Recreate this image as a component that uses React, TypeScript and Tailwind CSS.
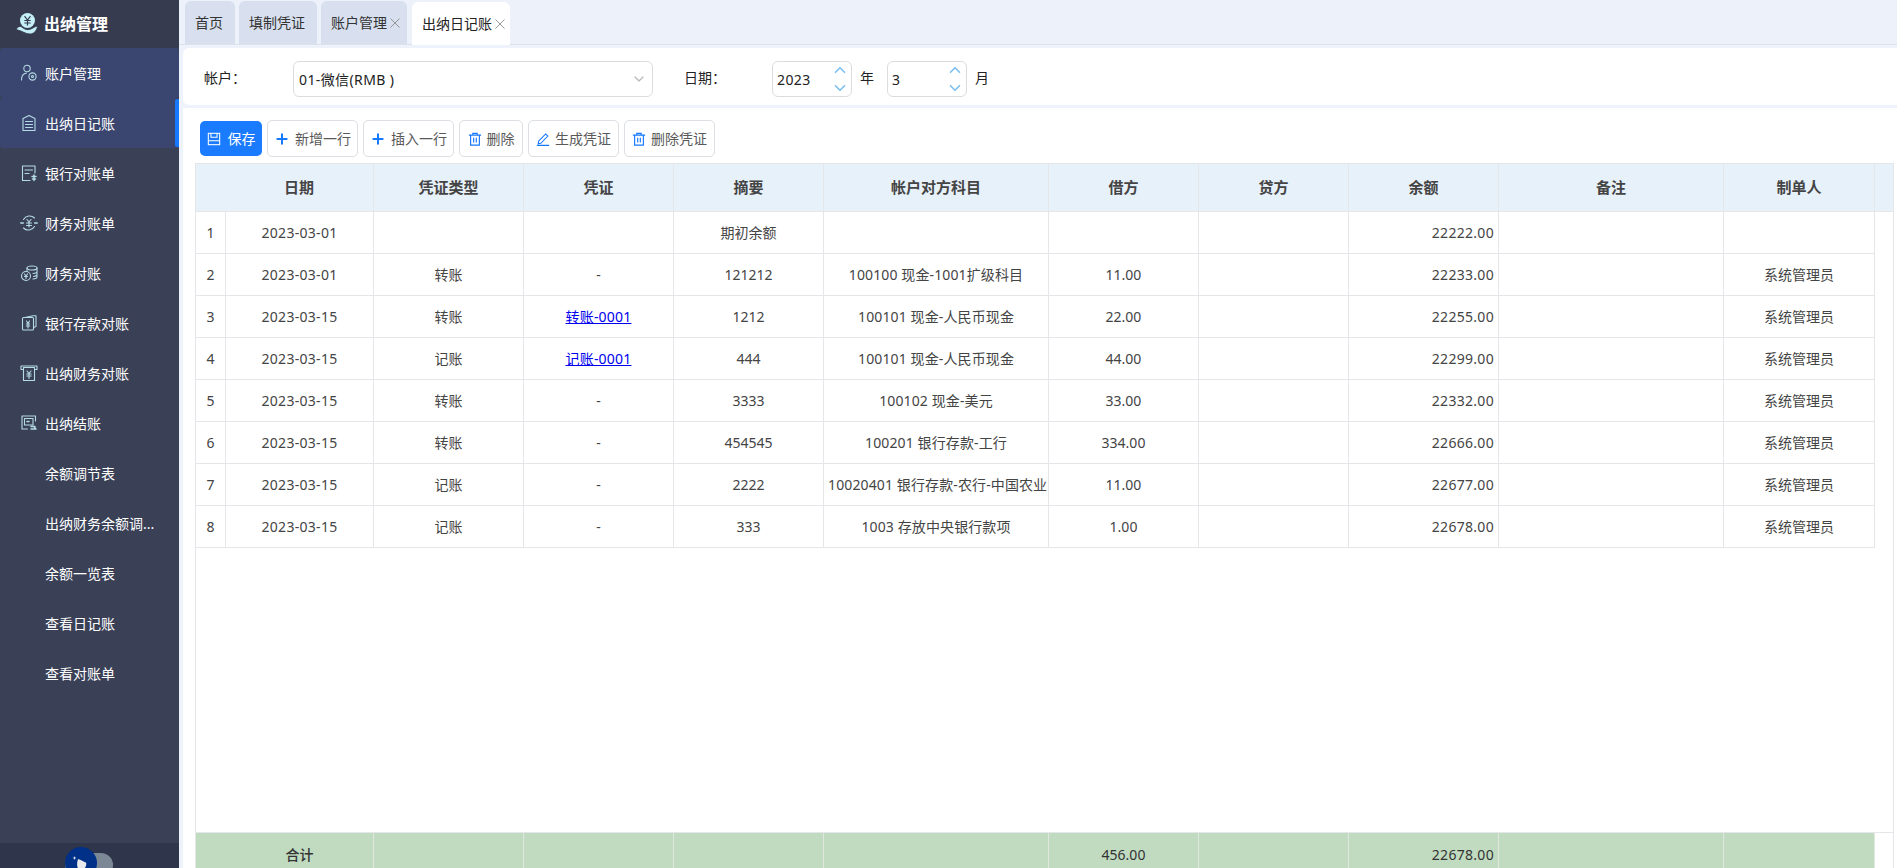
import { ChevronDown, ChevronUp, Plus } from "lucide-react";
import type { ReactNode } from "react";

const font = "font-['Noto_Sans','Noto_Sans_CJK_SC',sans-serif]";

const Ic = ({ children }: { children: ReactNode }) => (
  <svg
    viewBox="0 0 18 18"
    className="w-[18px] h-[18px] shrink-0"
    fill="none"
    stroke="#b5dbe4"
    strokeWidth="1.1"
    strokeLinecap="round"
    strokeLinejoin="round"
  >
    {children}
  </svg>
);

const menu: { name: string; icon?: ReactNode; hi?: boolean; active?: boolean }[] = [
  {
    name: "账户管理",
    hi: true,
    icon: (
      <Ic>
        <circle cx="7" cy="4.5" r="3.2" />
        <path d="M1.5 16c0-4 1.5-6.5 5-7" />
        <circle cx="12.5" cy="12.5" r="3.6" />
        <circle cx="12.5" cy="12.5" r="1" />
      </Ic>
    ),
  },
  {
    name: "出纳日记账",
    hi: true,
    active: true,
    icon: (
      <Ic>
        <path d="M3 4.5 9 1.5l6 3V16.5H3z" />
        <path d="M5.5 7.5h7M5.5 10.5h7M5.5 13.5h7" />
      </Ic>
    ),
  },
  {
    name: "银行对账单",
    icon: (
      <Ic>
        <path d="M15 9V2H2.5v14.5H10" />
        <path d="M5 6h7.5M5 9.5h4" />
        <path d="M12 12.5h4M14 11v5.5M12.5 15h3" strokeWidth="1.5" />
      </Ic>
    ),
  },
  {
    name: "财务对账单",
    icon: (
      <Ic>
        <path d="M3.5 5.5a7 7 0 0 1 11-1.5M14.5 12.5a7 7 0 0 1-11 1.5" />
        <path d="M.8 9h2.5M14.7 9h2.5" strokeWidth="1.5" />
        <path d="M7 5.5 9 8l2-2.500M6.500 9h5M6.500 11.500h5M9 8v5" />
      </Ic>
    ),
  },
  {
    name: "财务对账",
    icon: (
      <Ic>
        <ellipse cx="12" cy="4" rx="5" ry="2" />
        <path d="M7 4v3M17 4v9c0 1-1.500 1.800-4 2M17 7.500c0 1-1.500 1.800-4 2M17 10.500c0 1-1.500 1.700-3.500 2" />
        <circle cx="6" cy="12" r="4.500" />
        <path d="M4.500 10 6 12l1.500-2M4.500 12.500h3M6 12v2.500" />
      </Ic>
    ),
  },
  {
    name: "银行存款对账",
    icon: (
      <Ic>
        <path d="M5 3.500 13 1.800h3V12.500l-2.500 1" />
        <rect x="2.500" y="3.500" width="11" height="12.500" rx="1" />
        <path d="M6.500 7 8 9.500 9.500 7M6.300 10h3.400M6.300 12h3.400M8 9.500V14" />
      </Ic>
    ),
  },
  {
    name: "出纳财务对账",
    icon: (
      <Ic>
        <path d="M1 2h16v3.500H14.500M1 2v3.500h2.500" />
        <path d="M3.500 3.500h11V16.500h-11z" />
        <path d="M7 7l2 2.500L11 7M6.800 10h4.400M6.800 12h4.400M9 9.500V14.500" />
      </Ic>
    ),
  },
  {
    name: "出纳结账",
    icon: (
      <Ic>
        <path d="M15.500 7V2H2v13h5.500" />
        <path d="M4.500 4.500h8.500V11H4.500z" />
        <path d="M7 7.500h2M11 15h5M16 15l-1.500-1.500M11 12.500h4" strokeWidth="1.500" />
      </Ic>
    ),
  },
  { name: "余额调节表" },
  { name: "出纳财务余额调..." },
  { name: "余额一览表" },
  { name: "查看日记账" },
  { name: "查看对账单" },
];

const Sidebar = () => (
  <aside className="w-[179px] h-full shrink-0 flex flex-col bg-[#3a4157] text-white text-[14px]">
    <div className="h-[48px] shrink-0 bg-[#363b50] flex items-center pl-[16px] gap-[6px]">
      <svg viewBox="0 0 22 22" className="w-[22px] h-[22px] shrink-0">
        <circle cx="11.500" cy="7.500" r="7.500" fill="#c5f0f6" />
        <path d="M8.500 3.200 11.500 7l3-3.800M8.300 7.500h6.400M8.300 10h6.400M11.500 7v5.500" stroke="#363b50" strokeWidth="1.200" fill="none" />
        <path
          d="M0 16.500c1.500-2.500 3.500-3.500 5-3 2.500 1.800 5 3.800 8.500 3 3-.8 5-3 8-3.500-.3 3.500-3 8-7.500 8-4.500 0-7.500-3-14-4.500z"
          fill="#c5f0f6"
          stroke="#363b50"
          strokeWidth="0.8"
        />
      </svg>
      <span className="text-[16px] font-bold">出纳管理</span>
    </div>
    <nav className="flex-1">
      {menu.map((m) => (
        <div
          key={m.name}
          className={`relative h-[50px] flex items-center whitespace-nowrap ${m.hi ? "bg-[#3a4670] rounded-[4px]" : ""}`}
        >
          <div className="w-[45px] flex justify-end pr-[7px] shrink-0">{m.icon}</div>
          <span>{m.name}</span>
          {m.active && <span className="absolute right-0 top-[1px] bottom-[1px] w-[4px] bg-[#1677ff] rounded-l-[2px]" />}
        </div>
      ))}
    </nav>
    <div className="h-[25px] shrink-0 bg-[#2f354a] flex justify-center pt-[10px] overflow-hidden">
      <div className="relative w-[48px] h-[24px] rounded-full bg-[#7c8896] ml-[-2px]">
        <div className="absolute left-0 top-[-6px] w-[32px] h-[32px] rounded-full bg-[#003087] flex items-center justify-center">
          <svg viewBox="0 0 24 24" className="w-[24px] h-[24px]">
            <path d="M9 8c4 1 6 3 8 3.500 1 3-1 7-5 8-3.500-.5-5-5-3-11.500z" fill="#e8eaee" />
            <path d="M5.500 5l.6 1.500 1.400.5-1.400.5L5.500 9 5 7.500 3.500 7 5 6.500z" fill="#dfe6f2" />
          </svg>
        </div>
      </div>
    </div>
  </aside>
);

const XMark = () => (
  <svg viewBox="0 0 10 10" className="w-[10px] h-[10px] ml-[3px] shrink-0" stroke="#8c8c8c" strokeWidth="0.9">
    <path d="M.5.5l9 9M9.500.5l-9 9" />
  </svg>
);

const tabs = [
  { name: "首页", w: "w-[50px]" },
  { name: "填制凭证", w: "w-[78px]" },
  { name: "账户管理", w: "w-[86px]", close: true },
  { name: "出纳日记账", w: "w-[98px]", close: true, active: true },
];

const TabBar = () => (
  <div className="h-[45px] shrink-0 flex items-end gap-[4px] pl-[6px] border-b border-[#dde1e8] bg-[#edf1fa]">
    {tabs.map((t) => (
      <div
        key={t.name}
        className={`${t.w} flex items-center pl-[10px] rounded-t-[6px] text-[14px] ${
          t.active ? "h-[43px] bg-white text-[#222] mb-[-1px] ml-[1px]" : "h-[43px] bg-[#d8e0ef] text-[#333]"
        }`}
      >
        <span className="whitespace-nowrap">{t.name}</span>
        {t.close && <XMark />}
      </div>
    ))}
  </div>
);

const NumInput = ({ value }: { value: string }) => (
  <div className="w-[80px] h-[36px] border border-[#dcdcdc] rounded-[6px] flex items-center justify-between pl-[4px] pr-[2px] text-[14px] text-[#222] tracking-[0.4px]">
    <span>{value}</span>
    <div className="flex flex-col text-[#7cc0f0] w-[18px] items-center">
      <ChevronUp size={18} strokeWidth={2.2} />
      <ChevronDown size={18} strokeWidth={2.2} />
    </div>
  </div>
);

const FilterBar = () => (
  <div className="h-[57px] mt-[3px] ml-[4px] shrink-0 bg-white rounded-l-[6px] flex items-center pt-[5px] text-[14px] text-[#222]">
    <span className="w-[89px] pl-[21px] shrink-0 -mt-[3px]">帐户：</span>
    <div className="w-[360px] ml-[21px] h-[36px] border border-[#dcdcdc] rounded-[6px] flex items-center justify-between pl-[5px] pr-[5px] shrink-0">
      <span className="tracking-[0.4px]">01-微信(RMB )</span>
      <ChevronDown size={16} className="text-[#bbb]" />
    </div>
    <span className="ml-[31px] w-[88px] -mt-[3px]">日期：</span>
    <NumInput value="2023" />
    <span className="ml-[8px] w-[27px] -mt-[3px]">年</span>
    <NumInput value="3" />
    <span className="ml-[8px] -mt-[3px]">月</span>
  </div>
);

const SaveIcon = () => (
  <svg viewBox="0 0 16 16" className="w-[14px] h-[14px]" fill="none" stroke="#fff" strokeWidth="1.200">
    <rect x="1.500" y="1.500" width="13" height="13" />
    <path d="M1.500 10h13M4.500 1.500v4.500h7V1.500" />
  </svg>
);

const TrashIcon = () => (
  <svg viewBox="0 0 16 16" className="w-[14px] h-[14px]" fill="none" stroke="#1677ff" strokeWidth="1.300">
    <path d="M1 3.500h14M5.500 3.500V1.500h5v2M3 3.500v11.500h10V3.500M6.500 6.500v5.500M9.500 6.500v5.500" />
  </svg>
);

const PenIcon = () => (
  <svg viewBox="0 0 16 16" className="w-[14px] h-[14px]" fill="none" stroke="#1677ff" strokeWidth="1.200">
    <path d="M3 10.500 11 2.200l2.500 2.500-8 8.300-3 .5zM1 15.300h14" />
  </svg>
);

const Btn = ({ icon, text, w }: { icon: ReactNode; text: string; w: string }) => (
  <button className={`${w} h-[37px] border border-[#dcdfe3] rounded-[5px] bg-white flex items-center justify-center gap-[5px] text-[14px] text-[#595959] whitespace-nowrap`}>
    {icon}
    {text}
  </button>
);

const ToolBar = () => (
  <div className="flex items-center gap-[5px] pl-[5px] h-[37px]">
    <button className="w-[62px] h-[35px] rounded-[5px] bg-[#1a7bff] text-white flex items-center justify-center gap-[7px] text-[14px]">
      <SaveIcon />
      保存
    </button>
    <Btn w="w-[91px]" text="新增一行" icon={<Plus size={16} strokeWidth={3} className="text-[#1677ff]" />} />
    <Btn w="w-[91px]" text="插入一行" icon={<Plus size={16} strokeWidth={3} className="text-[#1677ff]" />} />
    <Btn w="w-[64px]" text="删除" icon={<TrashIcon />} />
    <Btn w="w-[91px]" text="生成凭证" icon={<PenIcon />} />
    <Btn w="w-[91px]" text="删除凭证" icon={<TrashIcon />} />
  </div>
);

type Row = [string, string, string, string, string, string, string, string];

const rows: Row[] = [
  ["2023-03-01", "", "", "期初余额", "", "", "22222.00", ""],
  ["2023-03-01", "转账", "-", "121212", "100100 现金-1001扩级科目", "11.00", "22233.00", "系统管理员"],
  ["2023-03-15", "转账", "转账-0001", "1212", "100101 现金-人民币现金", "22.00", "22255.00", "系统管理员"],
  ["2023-03-15", "记账", "记账-0001", "444", "100101 现金-人民币现金", "44.00", "22299.00", "系统管理员"],
  ["2023-03-15", "转账", "-", "3333", "100102 现金-美元", "33.00", "22332.00", "系统管理员"],
  ["2023-03-15", "转账", "-", "454545", "100201 银行存款-工行", "334.00", "22666.00", "系统管理员"],
  ["2023-03-15", "记账", "-", "2222", "10020401 银行存款-农行-中国农业", "11.00", "22677.00", "系统管理员"],
  ["2023-03-15", "记账", "-", "333", "1003 存放中央银行款项", "1.00", "22678.00", "系统管理员"],
];

const line = "border-r border-b border-[#e4e6e9]";
const td = `${line} px-[4px] overflow-hidden whitespace-nowrap text-center`;

const headCols = ["日期", "凭证类型", "凭证", "摘要", "帐户对方科目", "借方", "贷方", "余额", "备注", "制单人"];

const HeadColgroup = () => (
  <colgroup>
    <col className="w-[178px]" />
    <col className="w-[150px]" />
    <col className="w-[150px]" />
    <col className="w-[150px]" />
    <col className="w-[225px]" />
    <col className="w-[150px]" />
    <col className="w-[150px]" />
    <col className="w-[150px]" />
    <col className="w-[225px]" />
    <col className="w-[151px]" />
    <col className="w-[18px]" />
  </colgroup>
);

const DataTable = () => (
  <div className="flex-1 mt-[6px] flex flex-col min-h-0 border-l border-r border-t border-[#e4e6e9] overflow-hidden">
    <table className="w-[1697px] table-fixed border-separate border-spacing-0 shrink-0">
      <HeadColgroup />
      <thead>
        <tr className="h-[48px] bg-[#e7f1fa] text-[15px] font-bold text-[#444]">
          {headCols.map((c, i) => (
            <th key={c} className={`${line} font-bold ${i === 0 ? "pl-[29px]" : ""}`}>
              {c}
            </th>
          ))}
          <th className="border-b border-[#e4e6e9]" />
        </tr>
      </thead>
    </table>
    <div className="flex-1 min-h-0">
      <table className="w-[1679px] table-fixed border-separate border-spacing-0 text-[14px] text-[#444]">
        <colgroup>
          <col className="w-[30px]" />
          <col className="w-[148px]" />
          <col className="w-[150px]" />
          <col className="w-[150px]" />
          <col className="w-[150px]" />
          <col className="w-[225px]" />
          <col className="w-[150px]" />
          <col className="w-[150px]" />
          <col className="w-[150px]" />
          <col className="w-[225px]" />
          <col className="w-[151px]" />
        </colgroup>
        <tbody>
          {rows.map((r, i) => (
            <tr key={i} className="h-[42px]">
              <td className={td}>{i + 1}</td>
              <td className={`${td} tracking-[0.3px]`}>{r[0]}</td>
              <td className={td}>{r[1]}</td>
              <td className={`${td} tracking-[0.2px]`}>
                {r[2].length > 1 ? <a className="text-[#0000ee] underline">{r[2]}</a> : r[2]}
              </td>
              <td className={td}>{r[3]}</td>
              <td className={`${td} tracking-[0.12px]`}>{r[4]}</td>
              <td className={td}>{r[5]}</td>
              <td className={td} />
              <td className={`${td} !text-right tracking-[0.3px]`}>{r[6]}</td>
              <td className={td} />
              <td className={td}>{r[7]}</td>
            </tr>
          ))}
        </tbody>
      </table>
    </div>
    <table className="w-[1697px] table-fixed border-separate border-spacing-0 shrink-0 mb-[-8px] border-t border-[#e4e6e9] text-[14px] text-[#333]">
      <HeadColgroup />
      <tbody>
        <tr className="h-[43px]">
          <td className="bg-[#c0dbc0] border-r border-[#dfe7df] text-center pl-[30px] font-medium">合计</td>
          <td className="bg-[#c0dbc0] border-r border-[#dfe7df]" />
          <td className="bg-[#c0dbc0] border-r border-[#dfe7df]" />
          <td className="bg-[#c0dbc0] border-r border-[#dfe7df]" />
          <td className="bg-[#c0dbc0] border-r border-[#dfe7df]" />
          <td className="bg-[#c0dbc0] border-r border-[#dfe7df] text-center">456.00</td>
          <td className="bg-[#c0dbc0] border-r border-[#dfe7df]" />
          <td className="bg-[#c0dbc0] border-r border-[#dfe7df] text-right px-[4px] tracking-[0.3px]">22678.00</td>
          <td className="bg-[#c0dbc0] border-r border-[#dfe7df]" />
          <td className="bg-[#c0dbc0] border-r border-[#dfe7df]" />
          <td />
        </tr>
      </tbody>
    </table>
  </div>
);

const App = () => (
  <div className={`${font} flex w-full h-[868px] overflow-hidden bg-[#eef2fb]`}>
    <Sidebar />
    <div className="flex-1 min-w-0 flex flex-col h-full">
      <TabBar />
      <FilterBar />
      <main className="flex-1 min-h-0 mt-[3px] ml-[4px] bg-white flex flex-col pt-[12px] pl-[12px] pr-[3px]">
        <ToolBar />
        <DataTable />
      </main>
    </div>
  </div>
);

export default App;
